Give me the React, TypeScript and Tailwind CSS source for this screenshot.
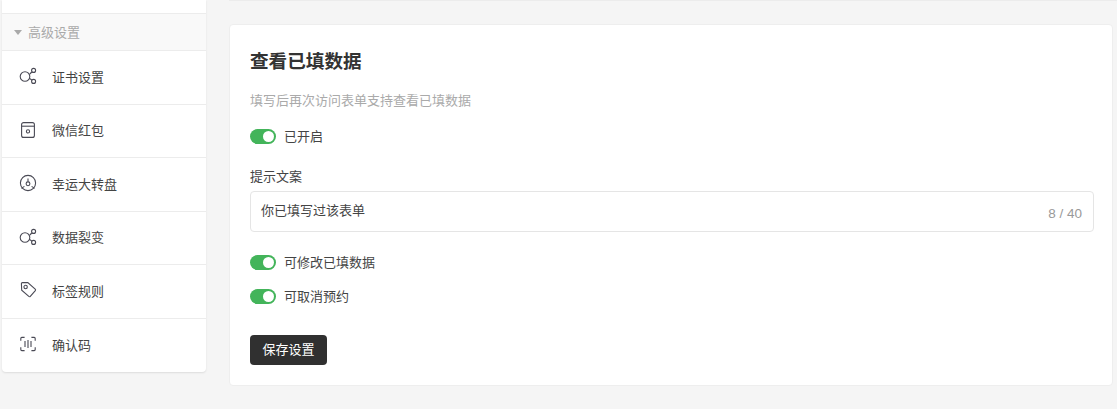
import type { ReactNode } from 'react';

const stroke = { fill: 'none', stroke: '#4a4a55', strokeWidth: 1.1 };

const ShareIcon = () => (
  <svg width="18" height="18" viewBox="0 0 18 18" {...stroke}>
    <circle cx="6" cy="9.5" r="4.8" />
    <circle cx="14.6" cy="3.4" r="2" />
    <circle cx="14.6" cy="14.4" r="2" />
    <path d="M10.8 7l2-2M10.6 11.4l2.4 1.8" />
  </svg>
);

const PacketIcon = () => (
  <svg width="18" height="18" viewBox="0 0 18 18" {...stroke}>
    <rect x="2.6" y="1.6" width="12.8" height="14.8" rx="2" />
    <path d="M2.6 5.2h12.8" />
    <circle cx="9" cy="10.4" r="1.6" />
  </svg>
);

const WheelIcon = () => (
  <svg width="18" height="18" viewBox="0 0 18 18" {...stroke}>
    <circle cx="9" cy="9" r="7.6" />
    <circle cx="9" cy="9.8" r="1.9" />
    <path d="M9 4.6v3.2M2.4 14.4l3-2M15.6 14.4l-3-2" />
  </svg>
);

const TagIcon = () => (
  <svg width="18" height="18" viewBox="0 0 18 18" {...stroke}>
    <path d="M2.4 2.6c0-.6.4-1 1-1h5.4l7.4 6.6c.5.5.5 1 .1 1.5l-5 5.6c-.4.5-1 .5-1.5.1L2.7 9.2z" />
    <circle cx="6.6" cy="6" r="1.7" />
  </svg>
);

const ScanIcon = () => (
  <svg width="18" height="18" viewBox="0 0 18 18" {...stroke}>
    <path d="M5.6 2.4H2.8c-.6 0-1 .4-1 1v2.4M12.4 2.4h2.8c.6 0 1 .4 1 1v2.4M5.6 15.6H2.8c-.6 0-1-.4-1-1v-2.4M12.4 15.6h2.8c.6 0 1-.4 1-1v-2.4" />
    <path d="M6 6v6M9 5v8M12 6v6" />
  </svg>
);

const items: { icon: ReactNode; label: string; h: string }[] = [
  { icon: <ShareIcon />, label: '证书设置', h: 'h-[54px]' },
  { icon: <PacketIcon />, label: '微信红包', h: 'h-[53px]' },
  { icon: <WheelIcon />, label: '幸运大转盘', h: 'h-[54px]' },
  { icon: <ShareIcon />, label: '数据裂变', h: 'h-[53px]' },
  { icon: <TagIcon />, label: '标签规则', h: 'h-[54px]' },
  { icon: <ScanIcon />, label: '确认码', h: 'h-[54px]' },
];

function Toggle({ label }: { label: string }) {
  return (
    <div className="flex items-center h-[15px]">
      <div className="w-[26px] h-[15px] rounded-full bg-[#43b45a] flex justify-end items-center pr-[2px]">
        <div className="w-[11px] h-[11px] rounded-full bg-white" />
      </div>
      <span className="ml-2 -mt-[2px] text-[13px] text-[#444]">{label}</span>
    </div>
  );
}

export default function App() {
  return (
    <div
      className="h-[409px] w-[1117px] overflow-hidden bg-[#f5f5f5] flex items-start pl-[2px]"
      style={{ fontFamily: '"Noto Sans CJK SC", "Noto Sans", sans-serif' }}
    >
      {/* Sidebar */}
      <aside className="w-[204px] bg-white rounded-b shadow-[0_1px_2px_rgba(0,0,0,0.1)]">
        <div className="h-[13px] border-b border-[#ececec] box-content" />
        <div className="h-[36px] bg-[#f9f9f9] flex items-center pl-[12px] text-[13px] text-[#aaa]">
          <span className="w-0 h-0 border-x-[4px] border-x-transparent border-t-[5px] border-t-[#aaa]" />
          <span className="ml-[6px]">高级设置</span>
        </div>
        {items.map((item) => (
          <div key={item.label} className={`${item.h} border-t border-[#ececec] flex items-center pl-[17px]`}>
            <div className="w-[18px] h-[18px] -mt-[3px]">{item.icon}</div>
            <span className="ml-[15px] -mt-[2px] text-[13px] text-[#444]">{item.label}</span>
          </div>
        ))}
      </aside>

      {/* Main */}
      <main className="ml-[23px] w-[888px] flex flex-col">
        <div className="h-[1px] -mr-[3px] mb-[23px] bg-white border-b border-[#ececec]" />
        <section className="h-[362px] w-[884px] bg-white rounded border border-[#eeeeee] pl-[20px] pr-[18px] pt-[23px]">
          <h2 className="text-[18.6px] font-bold leading-[24px] text-[#333]">查看已填数据</h2>
          <p className="mt-[18px] text-[13px] leading-[20px] text-[#aaa]">填写后再次访问表单支持查看已填数据</p>
          <div className="mt-[19px]">
            <Toggle label="已开启" />
          </div>
          <label className="block mt-[22px] text-[13px] leading-[20px] text-[#444]">提示文案</label>
          <div className="mt-[5px] h-[41px] border border-[#e5e5e5] rounded flex items-center justify-between pl-[10px] pr-[11px]">
            <span className="-mt-[4px] text-[13px] text-[#444]">你已填写过该表单</span>
            <span className="mt-[6px] text-[13.5px] text-[#999]" style={{ fontFamily: '"Liberation Sans", sans-serif' }}>8 / 40</span>
          </div>
          <div className="mt-[23px]">
            <Toggle label="可修改已填数据" />
          </div>
          <div className="mt-[19px]">
            <Toggle label="可取消预约" />
          </div>
          <button className="mt-[31px] w-[77px] h-[30px] bg-[#303030] rounded text-[13px] text-white flex items-center justify-center pb-[2px]">
            保存设置
          </button>
        </section>
      </main>
    </div>
  );
}
